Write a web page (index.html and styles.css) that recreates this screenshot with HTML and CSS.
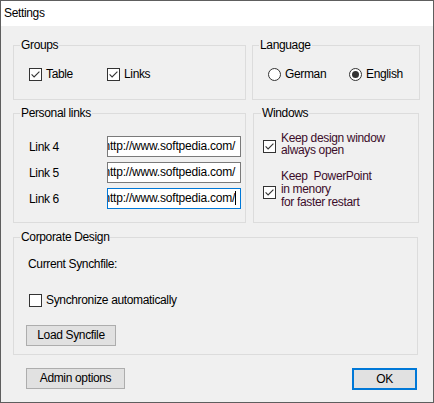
FILE: index.html
```html
<!DOCTYPE html>
<html>
<head>
<meta charset="utf-8">
<link rel="stylesheet" href="styles.css">
</head>
<body>
<div class="window">
  <div class="titlebar">Settings</div>
  <div class="content">
    <div class="row row1">
      <div class="group g-groups">
        <div class="legend">Groups</div>
        <div class="opts">
          <div class="opt w78"><span class="cb on"><svg viewBox="0 0 13 13" width="13" height="13"><path d="M2.6 6.4 L5.1 9 L10.4 3.6" fill="none" stroke="#333" stroke-width="1.1"/></svg></span><span>Table</span></div>
          <div class="opt"><span class="cb on"><svg viewBox="0 0 13 13" width="13" height="13"><path d="M2.6 6.4 L5.1 9 L10.4 3.6" fill="none" stroke="#333" stroke-width="1.1"/></svg></span><span>Links</span></div>
        </div>
      </div>
      <div class="group g-lang">
        <div class="legend">Language</div>
        <div class="opts">
          <div class="opt w81"><span class="rb"></span><span>German</span></div>
          <div class="opt"><span class="rb on"><span class="dot"></span></span><span>English</span></div>
        </div>
      </div>
    </div>

    <div class="row row2">
      <div class="group g-links">
        <div class="legend">Personal links</div>
        <div class="links">
          <div class="linkrow"><span class="lbl">Link 4</span><div class="tb"><span class="tbtext">http://www.softpedia.com/</span></div></div>
          <div class="linkrow"><span class="lbl">Link 5</span><div class="tb"><span class="tbtext">http://www.softpedia.com/</span></div></div>
          <div class="linkrow"><span class="lbl">Link 6</span><div class="tb focus"><span class="tbtext">http://www.softpedia.com/</span><span class="caret"></span></div></div>
        </div>
      </div>
      <div class="group g-win">
        <div class="legend">Windows</div>
        <div class="wopt first">
          <span class="cb on cb1"><svg viewBox="0 0 13 13" width="13" height="13"><path d="M2.6 6.4 L5.1 9 L10.4 3.6" fill="none" stroke="#333" stroke-width="1.1"/></svg></span>
          <div class="wtext"><div>Keep design window</div><div>always open</div></div>
        </div>
        <div class="wopt second">
          <span class="cb on cb2"><svg viewBox="0 0 13 13" width="13" height="13"><path d="M2.6 6.4 L5.1 9 L10.4 3.6" fill="none" stroke="#333" stroke-width="1.1"/></svg></span>
          <div class="wtext"><div class="l13">Keep&nbsp; PowerPoint</div><div class="l13">in menory</div><div>for faster restart</div></div>
        </div>
      </div>
    </div>

    <div class="row row3">
      <div class="group g-corp">
        <div class="legend">Corporate Design</div>
        <div class="corp">
          <div class="cur">Current Synchfile:</div>
          <div class="opt sync"><span class="cb"></span><span>Synchronize automatically</span></div>
          <div class="btn load">Load Syncfile</div>
        </div>
      </div>
    </div>

    <div class="row buttons">
      <div class="btn admin">Admin options</div>
      <div class="btn ok">OK</div>
    </div>
  </div>
</div>
</body>
</html>
```

FILE: styles.css
```css
* { box-sizing: border-box; }
html, body { margin: 0; padding: 0; }
body {
  font-family: "Liberation Sans", Arial, sans-serif;
  font-size: 12px;
  letter-spacing: -0.35px;
  color: #000;
  background: #f0f0f0;
}
.window {
  width: 434px;
  height: 403px;
  border: 1px solid #5e5e5e;
  display: flex;
  flex-direction: column;
  background: #f0f0f0;
}
.titlebar {
  height: 25px;
  line-height: 25px;
  padding-left: 3px;
  background: #fff;
  flex: none;
}
.content {
  flex: 1;
  padding: 19px 0 0 12px;
  background: #f0f0f0;
}
.row { display: flex; }
.row1 { gap: 6px; }
.row2 { gap: 7px; margin-top: 13px; }
.row3 { margin-top: 14px; }
.group {
  border: 1px solid #dcdcdc;
  flex: none;
}
.legend {
  width: fit-content;
  margin: -8px 0 0 6px;
  padding: 0 1px;
  line-height: 14px;
  background: #f0f0f0;
}
.g-groups { width: 233px; height: 55px; }
.g-lang { width: 168px; height: 55px; }
.g-links { width: 233px; height: 110px; }
.g-win { width: 166px; height: 110px; }
.g-corp { width: 405px; height: 118px; }

.opts {
  display: flex;
  padding: 16px 0 0 15px;
}
.opt {
  display: flex;
  align-items: center;
  line-height: 13px;
}
.w78 { width: 78px; }
.w81 { width: 81px; }
.cb {
  width: 13px;
  height: 13px;
  border: 1px solid #333;
  background: #fff;
  margin-right: 4px;
  flex: none;
  position: relative;
}
.cb svg {
  position: absolute;
  left: -1px;
  top: -1px;
}
.rb {
  width: 13px;
  height: 13px;
  border: 1px solid #333;
  border-radius: 50%;
  background: #fff;
  margin-right: 4px;
  flex: none;
  display: flex;
  align-items: center;
  justify-content: center;
}
.dot {
  width: 7px;
  height: 7px;
  border-radius: 50%;
  background: #333;
}

.links {
  display: flex;
  flex-direction: column;
  gap: 5px;
  padding: 16px 0 0 15px;
}
.linkrow {
  display: flex;
  align-items: center;
}
.lbl { width: 78px; }
.tb {
  width: 134px;
  height: 21px;
  border: 1px solid #7a7a7a;
  background: #fff;
  overflow: hidden;
  white-space: nowrap;
  line-height: 19px;
  padding-left: 1px;
  display: flex;
}
.tb.focus { border-color: #0078d7; }
.tbtext {
  margin-left: -5.5px;
  letter-spacing: -0.2px;
}
.caret {
  width: 1px;
  height: 14px;
  background: #000;
  margin: 2px 0 0 0;
  flex: none;
}

.g-win .legend { margin-left: 7px; }
.wopt {
  display: flex;
  align-items: flex-start;
  padding-left: 9px;
  color: #3c0d2a;
}
.wopt.first { margin-top: 12px; }
.wopt.second { margin-top: 14px; }
.wopt .cb { margin-right: 5px; }
.cb1 { margin-top: 8px; }
.cb2 { margin-top: 16px; }
.wtext { line-height: 12px; }
.wtext .l13 { line-height: 13px; }

.corp {
  padding: 13px 0 0 14px;
}
.cur { line-height: 14px; }
.sync { margin: 23px 0 0 1px; }
.btn {
  background: #e1e1e1;
  border: 1px solid #adadad;
  text-align: center;
  line-height: 19px;
  height: 21px;
  flex: none;
}
.load {
  width: 90px;
  margin: 18px 0 0 -2px;
}
.buttons {
  margin-top: 13px;
  padding-left: 13px;
  justify-content: space-between;
  padding-right: 16px;
}
.admin { width: 99px; }
.ok {
  width: 65px;
  height: 22px;
  border: 2px solid #0078d7;
  line-height: 18px;
}
```
